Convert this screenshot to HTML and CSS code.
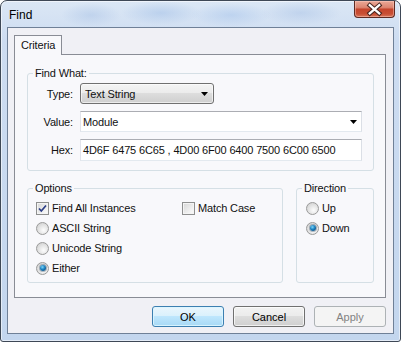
FILE: index.html
```html
<!DOCTYPE html>
<html lang="en">
<head>
    <meta charset="UTF-8">
    <title>Find</title>
    <link rel="stylesheet" href="styles.css">
</head>
<body>
    <div class="window">
        <div class="titlebar">
            <span class="title">Find</span>
            <button class="close-btn" type="button">
                <svg width="41" height="17" viewBox="0 0 41 17">
                    <path d="M15.5 4 L25.5 12.5 M25.5 4 L15.5 12.5" stroke="#4a2620" stroke-width="4.6" stroke-linecap="square"/>
                    <path d="M15.5 4 L25.5 12.5 M25.5 4 L15.5 12.5" stroke="#fff" stroke-width="2.4" stroke-linecap="square"/>
                </svg>
            </button>
        </div>

        <div class="client">
            <div class="tabs">
                <div class="tab">Criteria</div>
            </div>

            <div class="tab-panel">
                <!-- Find What -->
                <div class="group find-group">
                    <span class="group-title">Find What:</span>
                    <div class="field-grid">
                        <label>Type:</label>
                        <div class="combo-btn">
                            <span>Text String</span>
                            <svg width="7" height="4" viewBox="0 0 7 4"><polygon points="0,0 7,0 3.5,4" fill="#000"/></svg>
                        </div>

                        <label>Value:</label>
                        <div class="textbox">
                            <span>Module</span>
                            <svg width="7" height="4" viewBox="0 0 7 4"><polygon points="0,0 7,0 3.5,4" fill="#000"/></svg>
                        </div>

                        <label>Hex:</label>
                        <div class="textbox hex">
                            <span>4D6F 6475 6C65 , 4D00 6F00 6400 7500 6C00 6500</span>
                        </div>
                    </div>
                </div>

                <div class="group-row">
                    <!-- Options -->
                    <div class="group options-group">
                        <span class="group-title">Options</span>
                        <div class="opt">
                            <span class="check">
                                <svg width="11" height="11" viewBox="0 0 11 11"><path d="M2 5.5 L4.3 8 L9 2.5" fill="none" stroke="#2c3d86" stroke-width="1.7"/></svg>
                            </span>
                            Find All Instances
                        </div>
                        <div class="opt"><span class="check"></span>Match Case</div>
                        <div class="opt"><span class="radio"></span>ASCII String</div>
                        <div class="opt span-2"><span class="radio"></span>Unicode String</div>
                        <div class="opt"><span class="radio checked"></span>Either</div>
                    </div>

                    <!-- Direction -->
                    <div class="group direction-group">
                        <span class="group-title">Direction</span>
                        <div class="opt"><span class="radio"></span>Up</div>
                        <div class="opt"><span class="radio checked"></span>Down</div>
                    </div>
                </div>
            </div>

            <div class="buttons">
                <button type="button" class="btn btn-default">OK</button>
                <button type="button" class="btn">Cancel</button>
                <button type="button" class="btn btn-disabled" disabled>Apply</button>
            </div>
        </div>
    </div>
</body>
</html>
```

FILE: styles.css
```css
/* Reset */
* {
    margin: 0;
    padding: 0;
    box-sizing: border-box;
}

body {
    font-family: "Liberation Sans", Arial, sans-serif;
    font-size: 11px;
    letter-spacing: -0.15px;
    color: #111;
    background: #fff;
    width: 401px;
    height: 342px;
    overflow: hidden;
}

/* Aero window frame */
.window {
    width: 401px;
    height: 342px;
    border: 1px solid #3e4856;
    border-radius: 7px 7px 3px 3px;
    background:
        radial-gradient(ellipse 30px 12px at 90px 14px, rgba(170, 195, 230, 0.5), transparent),
        radial-gradient(ellipse 40px 12px at 160px 12px, rgba(160, 190, 230, 0.5), transparent),
        radial-gradient(ellipse 40px 12px at 230px 14px, rgba(165, 195, 235, 0.5), transparent),
        radial-gradient(ellipse 40px 12px at 300px 12px, rgba(170, 195, 230, 0.5), transparent),
        linear-gradient(180deg, #dbe7f5 0%, #cddcf1 40px, #c3d6ee 100%);
    box-shadow: inset 0 0 0 1px rgba(255, 255, 255, 0.55);
    padding: 0 6px 7px;
    display: flex;
    flex-direction: column;
}

.titlebar {
    height: 26px;
    display: flex;
    justify-content: space-between;
    align-items: flex-start;
}

.title {
    font-size: 12px;
    line-height: 14px;
    letter-spacing: 0;
    padding: 7px 0 0 2px;
    color: #000;
}

.close-btn {
    width: 41px;
    height: 17px;
    margin-right: -1px;
    border: 1px solid #5e2a22;
    border-top: none;
    border-radius: 0 0 4px 4px;
    background: linear-gradient(180deg, #eaa897 0%, #dc8672 40%, #c5452d 52%, #c84f34 80%, #d9775c 100%);
    box-shadow: inset 0 0 0 1px rgba(255, 210, 200, 0.45);
    display: flex;
}

/* Client area */
.client {
    flex: 1;
    border: 1px solid #6f8097;
    background: #f0f0f5;
    padding: 7px 7px 6px 6px;
    display: flex;
    flex-direction: column;
}

.tabs {
    display: flex;
}

.tab {
    height: 20px;
    line-height: 19px;
    padding: 0 6px;
    border: 1px solid #898c95;
    border-bottom: none;
    background: #f8f8fb;
    margin-bottom: -1px;
    position: relative;
    z-index: 1;
}

.tab-panel {
    height: 244px;
    border: 1px solid #898c95;
    background: #f8f8fb;
    padding: 18px 11px 0 12px;
}

/* Group boxes */
.group {
    position: relative;
    border: 1px solid #d5dfe5;
    border-radius: 3px;
}

.group-title {
    position: absolute;
    top: -7px;
    left: 5px;
    padding: 0 2px;
    line-height: 13px;
    background: #f8f8fb;
}

.find-group {
    padding: 9px 11px 9px 0;
}

.field-grid {
    display: grid;
    grid-template-columns: 45px 1fr;
    column-gap: 7px;
    row-gap: 7px;
    align-items: center;
}

.field-grid label {
    text-align: right;
}

.combo-btn {
    width: 134px;
    height: 21px;
    border: 1px solid #707070;
    border-radius: 3px;
    background: linear-gradient(180deg, #f4f4f4 0%, #ebebeb 50%, #dddddd 50%, #cfcfcf 100%);
    box-shadow: inset 0 0 0 1px rgba(255, 255, 255, 0.6);
    display: flex;
    align-items: center;
    justify-content: space-between;
    padding: 0 5px 0 4px;
}

.textbox {
    height: 21px;
    border: 1px solid;
    border-color: #abadb3 #dbdfe6 #e3e9ef #e2e3ea;
    background: #fff;
    display: flex;
    align-items: center;
    justify-content: space-between;
    padding: 0 4px 0 2px;
}

.textbox.hex {
    height: 22px;
}

.group-row {
    display: flex;
    gap: 13px;
    margin-top: 17px;
}

.options-group {
    width: 256px;
    padding: 9px 0 4px 8px;
    display: grid;
    grid-template-columns: 146px 1fr;
    grid-auto-rows: 20px;
}

.span-2 {
    grid-column: 1 / 3;
}

.direction-group {
    flex: 1;
    padding: 9px 0 4px 9px;
    display: grid;
    grid-auto-rows: 20px;
    align-content: start;
}

.opt {
    display: flex;
    align-items: center;
    gap: 3px;
    white-space: nowrap;
}

/* Checkbox */
.check {
    width: 13px;
    height: 13px;
    border: 1px solid #8e8f8f;
    background: linear-gradient(135deg, #d6d6d6 0%, #f2f2f2 70%, #fbfbfb 100%);
    box-shadow: inset 0 0 0 1px #f4f4f4;
    display: flex;
    align-items: center;
    justify-content: center;
}

.opt:first-child .check {
    background: linear-gradient(135deg, #dcdcdc 0%, #f4f4f4 70%, #fdfdfd 100%);
}

/* Radio */
.radio {
    width: 13px;
    height: 13px;
    border-radius: 50%;
    border: 1px solid #9a9a9a;
    background: radial-gradient(circle at 60% 65%, #fdfdfd 0%, #e6e6e6 45%, #c9c9c9 100%);
    position: relative;
}

.radio.checked::after {
    content: "";
    position: absolute;
    left: 2.5px;
    top: 2.5px;
    width: 6px;
    height: 6px;
    border-radius: 50%;
    background: radial-gradient(circle at 40% 35%, #7fd6f7 0%, #1a80c0 45%, #0b345c 100%);
    box-shadow: 0 0 0 1px rgba(30, 60, 90, 0.35);
}

/* Dialog buttons */
.buttons {
    display: flex;
    justify-content: flex-end;
    gap: 9px;
    margin-top: 8px;
}

.btn {
    width: 72px;
    height: 21px;
    font: inherit;
    color: #000;
    border: 1px solid #707070;
    border-radius: 3px;
    background: linear-gradient(180deg, #f2f2f2 0%, #ebebeb 50%, #dddddd 50%, #cfcfcf 100%);
    box-shadow: inset 0 0 0 1px rgba(255, 255, 255, 0.7);
}

.btn-default {
    border-color: #3c7fb1;
    background: linear-gradient(180deg, #eaf6fd 0%, #d9f0fc 50%, #bee6fd 50%, #a7d9f5 100%);
    box-shadow: inset 0 0 0 1px rgba(220, 245, 255, 0.9);
}

.btn-disabled {
    border-color: #adb2b5;
    background: #f4f4f4;
    color: #838383;
    box-shadow: none;
}
```
